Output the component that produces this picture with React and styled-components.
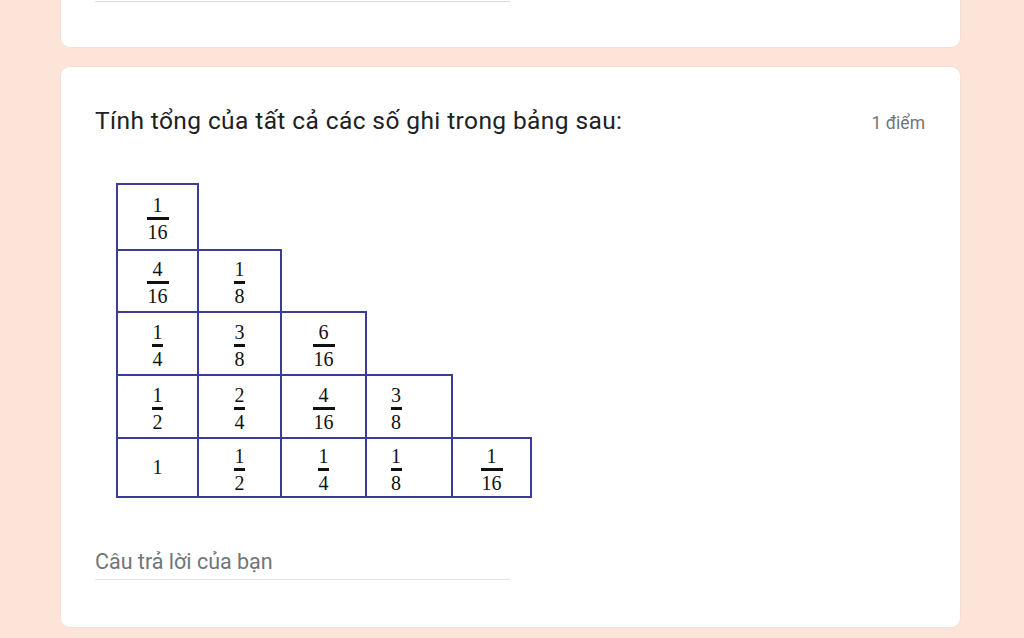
import React from 'react';
import styled, { createGlobalStyle } from 'styled-components';

const GlobalStyle = createGlobalStyle`
  html, body {
    margin: 0;
    padding: 0;
    background: #fce5d8;
    font-family: Roboto, "Liberation Sans", sans-serif;
  }
`;

const Page = styled.div`
  width: 1024px;
  height: 638px;
  overflow: hidden;
  padding-left: 60px;
  box-sizing: border-box;
  display: flex;
  flex-direction: column;
  gap: 18px;
`;

const Card = styled.div`
  width: 901px;
  box-sizing: border-box;
  background: #fff;
  border: 1px solid #f3e0d5;
  border-radius: 10px;
  padding: ${p => p.$pad || '0 34px'};
  flex-shrink: 0;
`;

const PrevCard = styled(Card)`
  margin-top: -20px;
  height: 68px;
  padding-top: 20px;
`;

const Underline = styled.div`
  width: 415px;
  height: 1px;
  background: #dadce0;
`;

const Header = styled.div`
  display: flex;
  justify-content: space-between;
  align-items: baseline;
`;

const Title = styled.div`
  font-size: 24.5px;
  color: #202124;
  letter-spacing: 0.4px;
`;

const Points = styled.div`
  font-size: 17.5px;
  color: #70757a;
  margin-right: 1px;
`;

const Picture = styled.table`
  margin: 48px 0 0 21px;
  border-collapse: collapse;
  font-family: "Liberation Serif", "DejaVu Serif", serif;
  font-size: 20px;
  color: #111;
`;

const Cell = styled.td`
  border: 2px solid #3b3b98;
  width: ${p => p.$w}px;
  height: ${p => p.$h}px;
  padding: 0;
  box-sizing: border-box;
  text-align: center;
  vertical-align: middle;
`;

const Frac = styled.span`
  display: inline-flex;
  flex-direction: column;
  align-items: center;
  line-height: 15px;
  margin-left: ${p => p.$shift || 0}px;
`;

const Bar = styled.span`
  display: block;
  width: ${p => p.$wide ? 22 : 11}px;
  height: 3px;
  background: #111;
  margin: 4px 0 5px;
`;

const Answer = styled.div`
  margin-top: 51px;
  width: 415px;
  border-bottom: 1px solid #e3e3e3;
  padding-bottom: 5px;
  font-size: 21.5px;
  color: #70757a;
`;

const cols = [81, 83, 85, 86, 79];
const heights = [66, 62, 63, 63, 59];

const rows = [
  [[1, 16]],
  [[4, 16], [1, 8]],
  [[1, 4], [3, 8], [6, 16]],
  [[1, 2], [2, 4], [4, 16], [3, 8]],
  [[1, 1], [1, 2], [1, 4], [1, 8], [1, 16]],
];

function Fraction({ n, d, shift }) {
  if (d === 1) return <Frac $shift={shift}>{n}</Frac>;
  return (
    <Frac $shift={shift}>
      <span>{n}</span>
      <Bar $wide={d > 9} />
      <span>{d}</span>
    </Frac>
  );
}

export default function App() {
  return (
    <>
      <GlobalStyle />
      <Page>
        <PrevCard>
          <Underline />
        </PrevCard>
        <Card $pad="39px 34px 47px">
          <Header>
            <Title>Tính tổng của tất cả các số ghi trong bảng sau:</Title>
            <Points>1 điểm</Points>
          </Header>
          <Picture>
            <tbody>
              {rows.map((row, i) => (
                <tr key={i}>
                  {row.map(([n, d], j) => (
                    <Cell key={j} $w={cols[j]} $h={heights[i]}>
                      <Fraction n={n} d={d} shift={j === 3 ? -26 : 0} />
                    </Cell>
                  ))}
                </tr>
              ))}
            </tbody>
          </Picture>
          <Answer>Câu trả lời của bạn</Answer>
        </Card>
      </Page>
    </>
  );
}
